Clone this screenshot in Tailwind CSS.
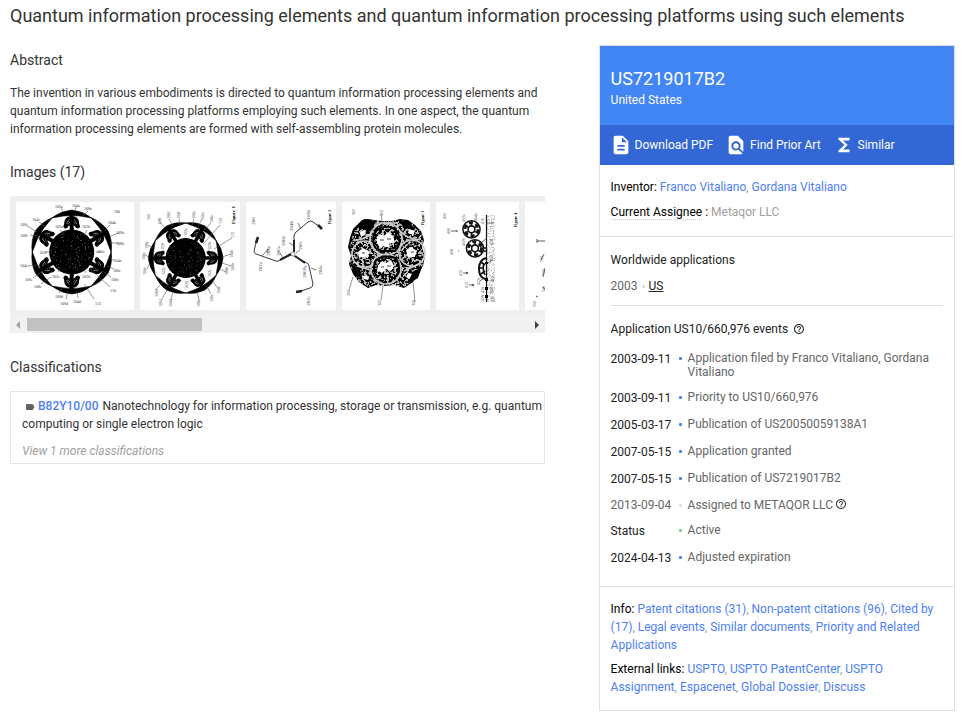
<!DOCTYPE html>
<html lang="en">

<head>
  <meta charset="UTF-8">
  <meta name="viewport" content="width=device-width, initial-scale=1.0">
  <title>US7219017B2 - Quantum information processing elements</title>
  <script src="https://cdn.jsdelivr.net/npm/@tailwindcss/browser@4"></script>
</head>

<body class="bg-white pt-1 pl-[10px] pr-[19px] font-['Roboto',sans-serif] text-xs leading-[18px] text-[#333]">

  <!-- Shared drawing parts -->
  <svg class="absolute h-0 w-0" aria-hidden="true">
    <defs>
      <filter id="specks" x="0" y="0" width="100%" height="100%">
        <feTurbulence type="fractalNoise" baseFrequency="0.6" numOctaves="2" seed="4" />
        <feColorMatrix values="0 0 0 0 1  0 0 0 0 1  0 0 0 0 1  9 0 0 0 -5.6" />
        <feComposite in2="SourceGraphic" operator="in" />
      </filter>
      <filter id="mottle" x="0" y="0" width="100%" height="100%">
        <feTurbulence type="fractalNoise" baseFrequency="0.4" numOctaves="3" seed="9" />
        <feColorMatrix values="0 0 0 0 1  0 0 0 0 1  0 0 0 0 1  9 0 0 0 -4.3" />
        <feComposite in2="SourceGraphic" operator="in" />
      </filter>
      <filter id="stipple" x="0" y="0" width="100%" height="100%">
        <feTurbulence type="fractalNoise" baseFrequency="0.7" numOctaves="2" seed="2" />
        <feColorMatrix values="0 0 0 0 .5  0 0 0 0 .5  0 0 0 0 .5  5 0 0 0 -2.3" />
        <feComposite in2="SourceGraphic" operator="in" />
      </filter>
      <g id="leg">
        <path d="M-20 -34Q-11 -41 0 -42Q11 -41 20 -34Q14 -35 8 -36Q0 -37 -8 -36Q-14 -35 -20 -34Z" stroke="#000" stroke-width=".6" />
        <path d="M0 -38V-21" stroke="#000" stroke-width="4" />
        <path d="M-3 -35Q-7 -34 -7 -28Q-9 -24 -6 -24Q-3 -24 -4 -28Q-3 -31 0 -31Q3 -31 4 -28Q3 -24 6 -24Q9 -24 7 -28Q7 -34 3 -35Z" stroke="#000" />
        <path d="M-5 -28Q-4 -32 -2 -32M5 -28Q4 -32 2 -32" fill="none" stroke="#bbb" stroke-width=".6" />
        <path d="M-3 -26Q-3 -29 0 -29Q3 -29 3 -26" fill="none" stroke="#000" stroke-width="1.500" />
      </g>
      <g id="ring">
        <use href="#leg" />
        <use href="#leg" transform="rotate(60)" />
        <use href="#leg" transform="rotate(120)" />
        <use href="#leg" transform="rotate(180)" />
        <use href="#leg" transform="rotate(240)" />
        <use href="#leg" transform="rotate(300)" />
        <circle r="22.500" />
        <circle r="21" fill="#fff" filter="url(#specks)" opacity=".3" />
      </g>
      <g id="wheel" fill="none" stroke="#111">
        <circle r="8.600" stroke-width="1.500" />
        <circle r="6.500" stroke-width="2.600" stroke-dasharray="4 2.800" />
        <circle r="3.400" stroke-width="1.600" />
        <path d="M0 -8V-3M0 3V8M-7 -4L-3 -2M3 2L7 4M-7 4L-3 2M3 -2L7 -4" stroke-width="1.500" />
      </g>
      <g id="help">
        <path d="M11 18h2v-2h-2v2zm1-16C6.480 2 2 6.480 2 12s4.480 10 10 10 10-4.480 10-10S17.520 2 12 2zm0 18c-4.410 0-8-3.590-8-8s3.590-8 8-8 8 3.590 8 8-3.590 8-8 8zm0-14c-2.210 0-4 1.790-4 4h2c0-1.100.9-2 2-2s2 .9 2 2c0 2-3 1.750-3 5h2c0-2.250 3-2.500 3-5 0-2.210-1.790-4-4-4z" />
      </g>
    </defs>
  </svg>

  <h1 class="text-lg leading-6">Quantum information processing elements and quantum information processing platforms using such elements</h1>

  <div class="mt-[17px] grid grid-cols-[3fr_2fr] items-start gap-[54px]">

    <main class="min-w-0 pt-[5px]">
      <h2 class="text-sm leading-5">Abstract</h2>
      <p class="mt-[14px]">The invention in various embodiments is directed to quantum information processing elements and quantum information processing platforms employing such elements. In one aspect, the quantum information processing elements are formed with self-assembling protein molecules.</p>

      <h2 class="mt-6 text-sm leading-5">Images (17)</h2>

      <!-- Image carousel -->
      <div class="mt-[14px] bg-[#efefef]">
        <div class="flex gap-[6px] overflow-hidden p-[6px] pr-0">
          <svg class="h-[108px] w-[118px] shrink-0 bg-white" viewBox="0 0 118 108" role="img" aria-label="Figure 1A" font-family="Liberation Serif, serif" font-size="4" text-anchor="middle">
            <use href="#ring" transform="translate(55.700 50)" />
            <g stroke="#555" stroke-width=".6">
              <path d="M45 6l2 4M60 5l-1 4M72 9l-5 5M23 20l7 5M11 24l10 6M14 33l8 1M94 23l-5 5M103 31l-8 3M103 41l-9 0M99 59l-7-4M98 67l-7-3M95 75l-8-6M94 85L73 66M78 97L68 82M62 96l-1-7M50 97l2-8M43 91l4-6M25 82l10-7M17 76l10-7M12 64l9-1" />
              <path d="M44 28l4 5M71 28l-3 5M80 50h5M34 50h-5M42 70l3-5M70 71l-3-5" />
            </g>
            <g fill="#333">
              <text x="43" y="6">106a</text>
              <text x="60" y="5">104a</text>
              <text x="72" y="8">108a</text>
              <text x="101" y="11">100</text>
              <text x="20" y="19">104f</text>
              <text x="8" y="24">106f</text>
              <text x="8" y="35">108f</text>
              <text x="96" y="22">104b</text>
              <text x="104" y="32">106b</text>
              <text x="104" y="43">108b</text>
              <text x="43" y="26">102a</text>
              <text x="70" y="26">102b</text>
              <text x="27" y="52">102f</text>
              <text x="85" y="51">102c</text>
              <text x="102" y="60">104c</text>
              <text x="101" y="70">106c</text>
              <text x="99" y="79">108c</text>
              <text x="97" y="90">110</text>
              <text x="82" y="103">112</text>
              <text x="61" y="101">104d</text>
              <text x="48" y="103">106d</text>
              <text x="43" y="96">108d</text>
              <text x="22" y="86">108e</text>
              <text x="13" y="79">106e</text>
              <text x="8" y="65">104e</text>
              <text x="40" y="76">102e</text>
              <text x="70" y="76">102d</text>
            </g>
          </svg>

          <svg class="h-[108px] w-[100px] shrink-0 bg-white" viewBox="0 0 100 108" role="img" aria-label="Figure 1" font-family="Liberation Serif, serif" font-size="4" text-anchor="middle">
            <use href="#ring" transform="translate(45.700 56) rotate(30) scale(.89)" />
            <g stroke="#555" stroke-width=".6">
              <path d="M20 20l5 6M29 17l4 7M39 17l1 6M54 17l-2 6M62 17l-4 8M71 21l-7 7M80 23L63 42M92 36L74 47M91 52l-9 3M91 64l-9-3M86 70l-6-3M78 86l-6-7M71 92l-5-9M59 98l-2-8M31 98l2-9M22 97l5-9M15 88l8-8M7 67l3-6M5 53l4 2M8 43l5 3" />
            </g>
            <g fill="#333">
              <text transform="translate(10 15) rotate(-90)">100</text>
              <text transform="translate(21 19) rotate(-90)">108f</text>
              <text transform="translate(30 13) rotate(-90)">106f</text>
              <text transform="translate(40 13) rotate(-90)">104f</text>
              <text transform="translate(55 13) rotate(-90)">104a</text>
              <text transform="translate(64 14) rotate(-90)">106a</text>
              <text transform="translate(73 17) rotate(-90)">108a</text>
              <text transform="translate(82 19) rotate(-90)">110</text>
              <text transform="translate(94 33) rotate(-90)">112</text>
              <text transform="translate(93 52) rotate(-90)">104b</text>
              <text transform="translate(94 65) rotate(-90)">106b</text>
              <text transform="translate(88 69) rotate(-90)">108b</text>
              <text transform="translate(80 88) rotate(-90)">104c</text>
              <text transform="translate(73 96) rotate(-90)">106c</text>
              <text transform="translate(60 101) rotate(-90)">108c</text>
              <text transform="translate(32 101) rotate(-90)">104d</text>
              <text transform="translate(22 101) rotate(-90)">106d</text>
              <text transform="translate(18 91) rotate(-90)">108d</text>
              <text transform="translate(6 69) rotate(-90)">104e</text>
              <text transform="translate(5 54) rotate(-90)">106e</text>
              <text transform="translate(8 43) rotate(-90)">108e</text>
              <text transform="translate(24 44) rotate(-90)">102f</text>
              <text transform="translate(47 30) rotate(-90)">102a</text>
              <text transform="translate(71 44) rotate(-90)">102b</text>
              <text transform="translate(71 71) rotate(-90)">102c</text>
              <text transform="translate(48 83) rotate(-90)">102d</text>
              <text transform="translate(25 69) rotate(-90)">102e</text>
            </g>
            <text transform="translate(95 13) rotate(-90)" font-size="5" font-weight="bold">Figure 1</text>
          </svg>

          <svg class="h-[108px] w-[90px] shrink-0 bg-white" viewBox="0 0 90 108" role="img" aria-label="Figure 2" font-family="Liberation Serif, serif" font-size="5" text-anchor="middle">
            <g fill="none" stroke="#222" stroke-linejoin="round">
              <path d="M11 37L8 49Q8 51 10 52L30 59Q32 60 34 58L45 53Q48 52 48 48V34Q48 32 50 30L62 20Q65 18 67 20L74 25M48 54L61 61Q63 62 63 64L67 82Q67 85 64 86L52 90" stroke-width=".9" />
              <path d="M34 58L45 52M48 50V38M49 54L59 61" stroke-width="2" />
              <path d="M10 41L12 35M72 23L76 27M56 89L50 90" stroke-width="2.600" />
              <path d="M16 54L22 47L21 51M34 51l3 5M43 41l4 2M52 21l3 6M54 48l-4 3M57 67l4-3M65 66l5 2" stroke-width=".6" />
            </g>
            <circle cx="47" cy="52" r="2" fill="#fff" stroke="#555" stroke-width=".6" />
            <g fill="#444">
              <text transform="translate(9 19) rotate(-90)">200</text>
              <text transform="translate(16 65) rotate(-90)">202a</text>
              <text transform="translate(24 49) rotate(-90)">204a</text>
              <text transform="translate(34 49) rotate(-90)">206a</text>
              <text transform="translate(39 39) rotate(-90)">206b</text>
              <text transform="translate(47 24) rotate(-90)">204b</text>
              <text transform="translate(64 13) rotate(-90)">202b</text>
              <text transform="translate(56 44) rotate(-90)">208</text>
              <text transform="translate(60 71) rotate(-90)">206c</text>
              <text transform="translate(76 68) rotate(-90)">204c</text>
              <text transform="translate(64 99) rotate(-90)">202c</text>
            </g>
            <text transform="translate(85 15) rotate(-90)" font-weight="bold" font-size="4">Figure 2</text>
          </svg>

          <svg class="h-[108px] w-[88px] shrink-0 bg-white" viewBox="0 0 88 108" role="img" aria-label="Figure 3" font-family="Liberation Serif, serif" font-size="4" text-anchor="middle">
            <path d="M20 18L26 17L32 18L40 19H50L58 17L66 18L73 23L79 29L82 38L80 46L83 54L81 64L76 72L71 80L62 86L52 83L42 84L34 83L26 86L17 80L11 72L7 62L9 54L6 45L8 36L11 27Z" />
            <path d="M27 18H64Q74 22 79 30Q84 50 80 66Q75 78 62 85H28Q16 82 9 69Q6 42 12 30Q18 22 27 18Z" fill="#fff" filter="url(#mottle)" opacity=".75" />
            <g fill="none" stroke="#ccc">
              <g stroke-width="1.600">
                <circle cx="44" cy="37" r="16" />
                <circle cx="23" cy="52" r="13" />
                <circle cx="70" cy="51" r="13" />
                <circle cx="44" cy="67" r="15" />
              </g>
              <path d="M11 38Q23 39 31 29M58 29Q68 39 79 37M30 21H56M15 64L28 68M62 69L77 62" stroke-width="1.600" />
            </g>
            <g fill="none" stroke="#000" stroke-width="2">
              <path d="M32 43Q29 30 38 26Q50 22 56 31Q60 42 53 49H39Q34 48 32 43" />
              <path d="M34 74Q30 66 34 58Q42 52 54 56Q60 66 54 75" />
            </g>
            <path d="M22 17L34 20L28 29L16 26ZM58 18L67 19L73 29L61 25ZM9 62L18 67L20 77L12 72ZM70 70L80 65L76 76L66 82Z" />
            <g fill="#fff">
              <path d="M35 35l3-3 4 2 4-4 5 4 2 6-6 2 1 4-6-2-4 2-3-5z" />
              <path d="M36 64l4-5 4 2 5-3 3 6-3 5-5-2-4 4-5-3z" />
              <path d="M16 50l5-4 6 3-1 7-6-1-3 1zM64 48l5-3 6 4-3 6-6 1zM18 30l4-2 2 4-5 3zM67 27l6 2-2 4-5-2zM20 74l5-1 1 5-4-1zM66 71l4 1-3 5-3-2z" />
            </g>
            <path d="M38 38h4M45 37h4M39 65h3M45 64h4M20 51h3M69 50h3" stroke="#444" />
            <path d="M39 12l2 14M11 75L7 88M41 84l-2 14M71 80l2 20" stroke="#666" stroke-width=".7" />
            <g fill="#444">
              <text transform="translate(13 10) rotate(-90)">300</text>
              <text transform="translate(41 11) rotate(-90)">302</text>
              <text transform="translate(8 91) rotate(-90)">304</text>
              <text transform="translate(39 101) rotate(-90)">302</text>
              <text transform="translate(73 101) rotate(-90)">304</text>
            </g>
            <text transform="translate(82 16) rotate(-90)" font-weight="bold">Figure 3</text>
          </svg>

          <svg class="h-[108px] w-[83px] shrink-0 bg-white" viewBox="0 0 83 108" role="img" aria-label="Figure 4" font-family="Liberation Serif, serif" font-size="4" text-anchor="middle">
            <rect x="51" y="13" width="8" height="87" filter="url(#stipple)" />
            <use href="#wheel" transform="translate(35.500 27.300)" />
            <use href="#wheel" transform="translate(39 46.300)" />
            <g fill="none" stroke="#111">
              <path d="M50 56Q43 58 43 67Q43 75 49 77" stroke-width="2" />
              <path d="M48 61Q46 67 49 73M43 66h5M45 60l4 3M45 72l4-3" stroke-width="1.600" />
              <path d="M50.500 13V100" stroke-width="1.200" />
              <path d="M44 46h7M44 49h7" stroke-width="1.500" />
            </g>
            <path d="M49 60h3v2h-3zM49 76h3v3h-3zM49 85h3v3h-3zM49 93h3v3h-3z" />
            <path d="M15 29h6M21 28v2M27 71h5M30 70l2 1-2 1M33 83h5M36 82l2 1-2 1M22 49h1M50 21h8M46 40l5-4M29 22l3 2M52 61l4-3M44 79l4-3" stroke="#222" stroke-width=".7" fill="none" />
            <g fill="#444">
              <text transform="translate(10 14) rotate(-90)">400</text>
              <text transform="translate(29 16) rotate(-90)">402a</text>
              <text transform="translate(41 15) rotate(-90)">404a</text>
              <text transform="translate(14 29) rotate(-90)">406</text>
              <text transform="translate(17 50) rotate(-90)">408</text>
              <text transform="translate(29 40) rotate(-90)">402b</text>
              <text transform="translate(26 71) rotate(-90)">410</text>
              <text transform="translate(32 83) rotate(-90)">412</text>
              <text transform="translate(48 19) rotate(-90)">416</text>
              <text transform="translate(57 40) rotate(-90)">418</text>
              <text transform="translate(57 56) rotate(-90)">420</text>
              <text transform="translate(44 79) rotate(-90)">402c</text>
              <text transform="translate(58 77) rotate(-90)">422</text>
              <text transform="translate(48 88) rotate(-90)">424</text>
              <text transform="translate(57 88) rotate(-90)">426</text>
              <text transform="translate(48 96) rotate(-90)">428</text>
              <text transform="translate(58 97) rotate(-90)">430</text>
            </g>
            <text transform="translate(81 18) rotate(-90)" font-weight="bold">Figure 4</text>
          </svg>

          <svg class="h-[108px] w-[80px] shrink-0 bg-white" viewBox="0 0 80 108" role="img" aria-label="Figure 5" font-family="Liberation Serif, serif" font-size="4" text-anchor="middle">
            <path d="M12 39H60M12 37v4M16 58l3-6M18 75l2-9M11 94l2 1M18 85l4 5" stroke="#333" stroke-width=".8" fill="none" />
            <g fill="#444">
              <text transform="translate(18 57) rotate(-90)">502</text>
              <text transform="translate(20 70) rotate(-90)">504</text>
              <text transform="translate(20 87) rotate(-90)">506</text>
              <text transform="translate(11 102) rotate(-90)">500</text>
            </g>
          </svg>
        </div>

        <!-- Scroll bar -->
        <div class="flex h-[17px] items-center bg-[#f1f1f1]">
          <svg class="h-[17px] w-[17px] shrink-0" viewBox="0 0 17 17" fill="#a3a3a3" aria-hidden="true"><path d="M10 5v8L6 9z" /></svg>
          <div class="flex-1">
            <div class="h-[13px] w-[35%] bg-[#c1c1c1]"></div>
          </div>
          <svg class="h-[17px] w-[17px] shrink-0" viewBox="0 0 17 17" fill="#404040" aria-hidden="true"><path d="M7 5v8l4-4z" /></svg>
        </div>
      </div>

      <h2 class="mt-6 text-sm leading-5">Classifications</h2>

      <div class="mt-[14px] border border-[#e5e5e5] pt-[5px] pb-[3px] pl-[11px]">
        <p>
          <svg class="ml-[3px] inline h-3 w-[10px] align-[-3px]" viewBox="0 0 10 12" fill="#5f6368" aria-hidden="true"><path d="M2 3h5q.6 0 1 .5L9.500 6 8 8.500q-.4.5-1 .5H2Q1 9 1 8V4Q1 3 2 3z" /></svg>
          <a href="#" class="mr-px font-medium text-[#4e80f5]">B82Y10/00</a>
          Nanotechnology for information processing, storage or transmission, e.g. quantum computing or single electron logic
        </p>
        <button type="button" class="mt-[9px] block italic text-[#a0a0a0]">View 1 more classifications</button>
      </div>
    </main>

    <!-- Knowledge card -->
    <aside class="border border-[#e0e0e0]">
      <header class="bg-[#4285f4] px-[11px] pt-[21px] pb-4 text-white">
        <h2 class="text-lg leading-6">US7219017B2</h2>
        <p>United States</p>
      </header>

      <nav class="flex h-10 items-center gap-3 bg-[#3367d6] px-[10px] text-white">
        <a href="#" class="flex items-center gap-[3px]">
          <svg class="h-[22px] w-[22px]" viewBox="0 0 24 24" fill="currentColor" aria-hidden="true"><path d="M14 2H6c-1.100 0-2 .9-2 2v16c0 1.100.89 2 2 2h12c1.100 0 2-.9 2-2V8l-6-6zm2 16H8v-2h8v2zm0-4H8v-2h8v2zm-3-5V3.500L18.500 9H13z" /></svg>
          <span>Download PDF</span>
        </a>
        <a href="#" class="flex items-center gap-[3px]">
          <svg class="h-[22px] w-[22px]" viewBox="0 0 24 24" fill="currentColor" aria-hidden="true"><path d="M20 19.590V8l-6-6H6c-1.100 0-1.990.9-1.990 2L4 20c0 1.100.89 2 1.990 2H18c.45 0 .85-.15 1.190-.4l-4.430-4.430c-.8.520-1.740.830-2.760.830-2.760 0-5-2.240-5-5s2.240-5 5-5 5 2.240 5 5c0 1.020-.31 1.960-.83 2.750L20 19.590zM9 13c0 1.660 1.340 3 3 3s3-1.340 3-3-1.340-3-3-3-3 1.340-3 3z" /></svg>
          <span>Find Prior Art</span>
        </a>
        <a href="#" class="flex items-center gap-[3px]">
          <svg class="h-[22px] w-[22px]" viewBox="0 0 24 24" fill="currentColor" aria-hidden="true"><path d="M18 4H6v2l6.500 6L6 18v2h12v-3h-7l5-5-5-5h7z" /></svg>
          <span>Similar</span>
        </a>
      </nav>

      <section class="px-[11px] pt-[13px] pb-[15px] text-[#a0a0a0]">
        <p><span class="text-black">Inventor:</span> <a href="#" class="text-[#4e80f5]">Franco Vitaliano</a>, <a href="#" class="text-[#4e80f5]">Gordana Vitaliano</a></p>
        <p class="mt-[7px]"><span class="border-b border-dotted border-[#ccc] text-black">Current Assignee</span> <span class="text-black">:</span> Metaqor LLC</p>
      </section>

      <section class="border-t border-[#e0e0e0] px-[11px] pt-[14px] pb-5 text-[#666]">
        <h3 class="text-[#212121]">Worldwide applications</h3>
        <div class="mt-2 flex items-center border-b border-[#e0e0e0] pb-[10px]">
          <span>2003</span>
          <span class="mx-1 h-[3px] w-[3px] rounded-[1px] bg-[#ddd]"></span>
          <a href="#" class="text-[#212121] underline">US</a>
        </div>

        <h3 class="mt-[14px] flex items-center gap-[5px] text-[#212121]">
          Application US10/660,976 events
          <svg class="h-3 w-3" viewBox="0 0 24 24" fill="currentColor" aria-hidden="true"><use href="#help" /></svg>
        </h3>

        <!-- Timeline -->
        <div class="mt-[13px] flex flex-col gap-[11px] leading-[14px]">
          <div class="grid grid-cols-[68px_9px_1fr]">
            <span class="leading-4 text-[#212121]">2003-09-11</span>
            <span class="mt-[6px] h-[3px] w-[3px] rounded-[1px] bg-[#4285f4]"></span>
            <span>Application filed by Franco Vitaliano, Gordana Vitaliano</span>
          </div>
          <div class="grid grid-cols-[68px_9px_1fr]">
            <span class="leading-4 text-[#212121]">2003-09-11</span>
            <span class="mt-[6px] h-[3px] w-[3px] rounded-[1px] bg-[#4285f4]"></span>
            <span>Priority to US10/660,976</span>
          </div>
          <div class="grid grid-cols-[68px_9px_1fr]">
            <span class="leading-4 text-[#212121]">2005-03-17</span>
            <span class="mt-[6px] h-[3px] w-[3px] rounded-[1px] bg-[#4285f4]"></span>
            <span>Publication of US20050059138A1</span>
          </div>
          <div class="grid grid-cols-[68px_9px_1fr]">
            <span class="leading-4 text-[#212121]">2007-05-15</span>
            <span class="mt-[6px] h-[3px] w-[3px] rounded-[1px] bg-[#4285f4]"></span>
            <span>Application granted</span>
          </div>
          <div class="grid grid-cols-[68px_9px_1fr]">
            <span class="leading-4 text-[#212121]">2007-05-15</span>
            <span class="mt-[6px] h-[3px] w-[3px] rounded-[1px] bg-[#4285f4]"></span>
            <span>Publication of US7219017B2</span>
          </div>
          <div class="grid grid-cols-[68px_9px_1fr]">
            <span>2013-09-04</span>
            <span class="mt-[6px] h-[3px] w-[3px] rounded-[1px] bg-[#ddd]"></span>
            <span class="flex gap-[2px]">
              Assigned to METAQOR LLC
              <svg class="h-3 w-3" viewBox="0 0 24 24" fill="#333" aria-hidden="true"><use href="#help" /></svg>
            </span>
          </div>
          <div class="grid grid-cols-[68px_9px_1fr]">
            <span class="leading-4 text-[#212121]">Status</span>
            <span class="mt-[6px] h-[3px] w-[3px] rounded-[1px] bg-[#81c995]"></span>
            <span>Active</span>
          </div>
          <div class="grid grid-cols-[68px_9px_1fr]">
            <span class="leading-4 text-[#212121]">2024-04-13</span>
            <span class="mt-[6px] h-[3px] w-[3px] rounded-[1px] bg-[#4285f4]"></span>
            <span>Adjusted expiration</span>
          </div>
        </div>
      </section>

      <section class="border-t border-[#e0e0e0] px-[11px] pt-[13px] pb-[14px] text-[#a0a0a0]">
        <p>
          <span class="text-black">Info:</span>
          <a href="#" class="text-[#4e80f5]">Patent citations (31)</a>,
          <a href="#" class="text-[#4e80f5]">Non-patent citations (96)</a>,
          <a href="#" class="text-[#4e80f5]">Cited by (17)</a>,
          <a href="#" class="text-[#4e80f5]">Legal events</a>,
          <a href="#" class="text-[#4e80f5]">Similar documents</a>,
          <a href="#" class="text-[#4e80f5]">Priority and Related Applications</a>
        </p>
        <p class="mt-[6px]">
          <span class="text-black">External links:</span>
          <a href="#" class="text-[#4e80f5]">USPTO</a>,
          <a href="#" class="text-[#4e80f5]">USPTO PatentCenter</a>,
          <a href="#" class="text-[#4e80f5]">USPTO Assignment</a>,
          <a href="#" class="text-[#4e80f5]">Espacenet</a>,
          <a href="#" class="text-[#4e80f5]">Global Dossier</a>,
          <a href="#" class="text-[#4e80f5]">Discuss</a>
        </p>
      </section>
    </aside>
  </div>

</body>

</html>
